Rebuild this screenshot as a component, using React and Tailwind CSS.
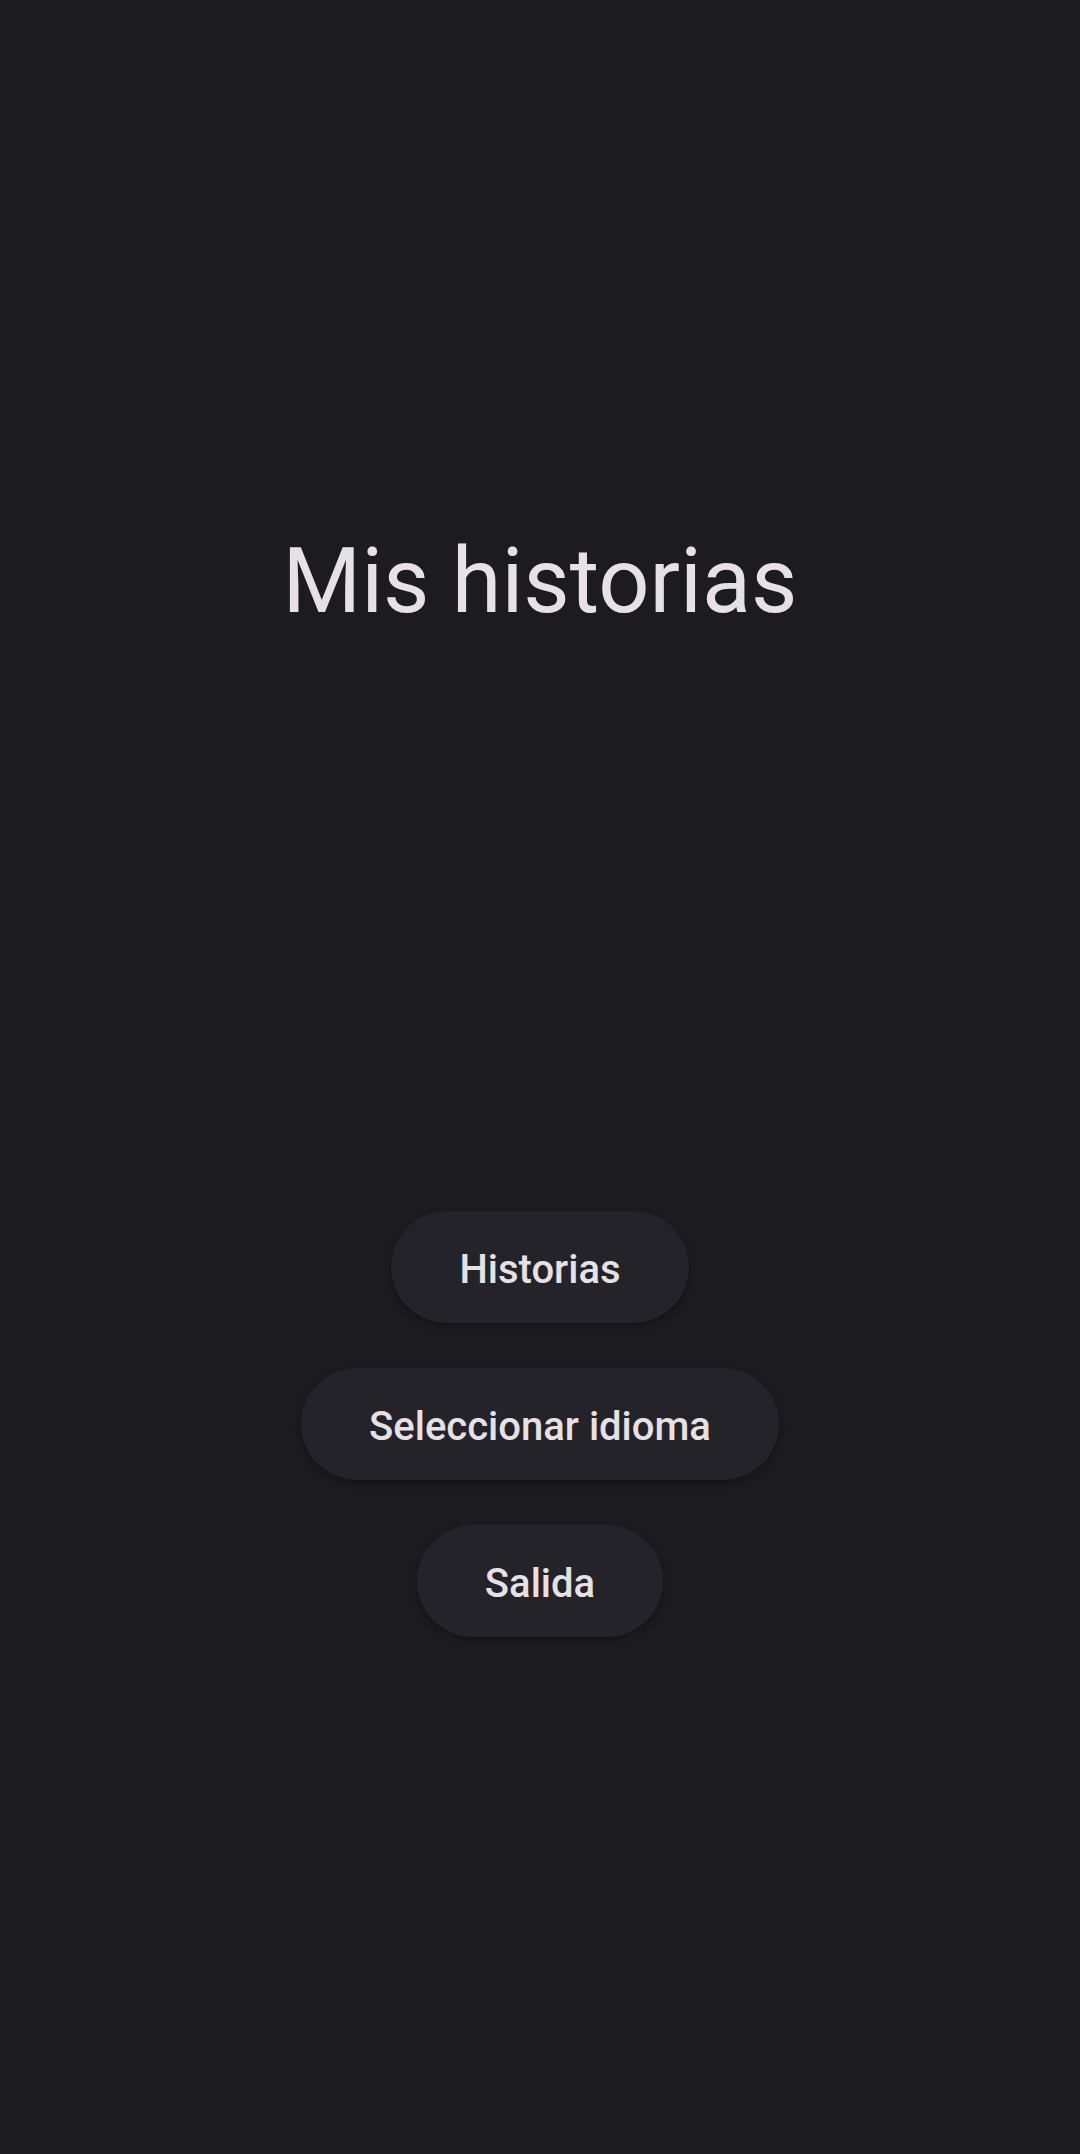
const buttons = ['Historias', 'Seleccionar idioma', 'Salida']

const App = () => {
  return (
    <div className="flex min-h-[2154px] w-full flex-col items-center bg-[#1c1b1f] pt-[529px] font-['Roboto',sans-serif]">
      <h1 className="text-[90px] font-normal leading-[106px] text-[#e6e1e5]">Mis historias</h1>

      <div className="mt-[576px] flex flex-col items-center gap-[45px]">
        {buttons.map(label => (
          <button
            key={label}
            className="h-[112px] rounded-full bg-[#25232a] px-[68px] pt-[5px] text-[40px] font-medium text-[#e6e1e5] shadow-[0_3px_6px_rgba(0,0,0,0.3)]"
          >
            {label}
          </button>
        ))}
      </div>
    </div>
  )
}

export default App
